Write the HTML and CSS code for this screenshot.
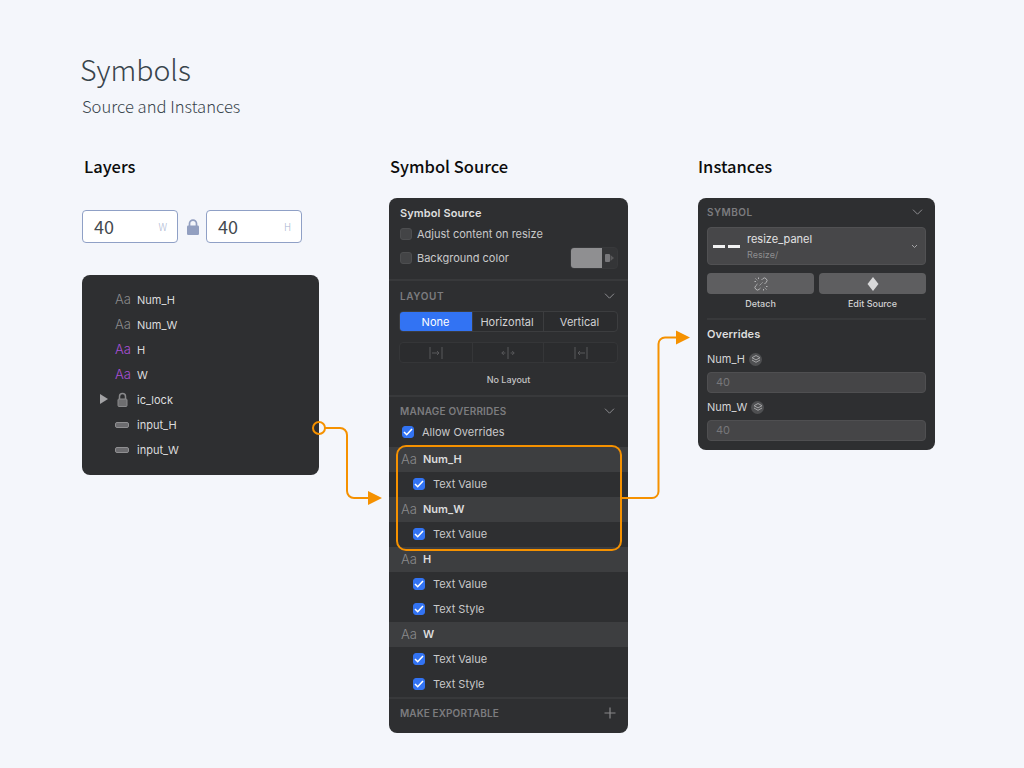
FILE: index.html
```html
<!DOCTYPE html>
<html lang="en">
<head>
<meta charset="utf-8">
<title>Symbols</title>
<link rel="stylesheet" href="styles.css">
</head>
<body>
<main class="page">
  <header class="head">
    <h1 class="title">Symbols</h1>
    <p class="subtitle">Source and Instances</p>
  </header>
  <div class="columns">
    <section class="col col-layers">
      <h2 class="col-title">Layers</h2>
      <div class="size-row">
        <div class="size-input"><span class="size-val">40</span><span class="size-unit">W</span></div>
        <svg class="size-lock" width="14" height="16" viewBox="0 0 14 16"><path d="M3.5 7V4.6a3.5 3.5 0 0 1 7 0V7" fill="none" stroke="#929fc0" stroke-width="1.7"/><rect x="1" y="6.5" width="12" height="9.5" rx="1.2" fill="#929fc0"/></svg>
        <div class="size-input"><span class="size-val">40</span><span class="size-unit">H</span></div>
      </div>
      <div class="panel layers">
        <div class="layer"><span class="aa">Aa</span><span>Num_H</span></div>
        <div class="layer"><span class="aa">Aa</span><span>Num_W</span></div>
        <div class="layer"><span class="aa purple">Aa</span><span>H</span></div>
        <div class="layer"><span class="aa purple">Aa</span><span>W</span></div>
        <div class="layer">
          <svg class="caret" width="8" height="10" viewBox="0 0 8 10"><path d="M0 0l8 5-8 5z" fill="#a3a3a5"/></svg>
          <svg class="layer-icon" width="14" height="15" viewBox="0 0 14 15"><path d="M4 7V4.500a3 3 0 0 1 6 0V7" fill="none" stroke="#8a8a8c" stroke-width="1.500"/><rect x="2.500" y="7" width="9" height="7.500" rx="1" fill="#6e6e70" stroke="#8a8a8c"/></svg>
          <span>ic_lock</span>
        </div>
        <div class="layer"><span class="bar-icon"></span><span>input_H</span></div>
        <div class="layer"><span class="bar-icon"></span><span>input_W</span></div>
      </div>
    </section>

    <section class="col col-source">
      <h2 class="col-title">Symbol Source</h2>
      <div class="panel source">
        <div class="block block-top">
          <div class="strong-title">Symbol Source</div>
          <label class="check-row"><span class="box"></span>Adjust content on resize</label>
          <label class="check-row bg-row"><span class="box"></span>Background color
            <span class="swatch"><span class="swatch-fill"></span><svg class="swatch-icon" width="9" height="10" viewBox="0 0 9 10"><rect x="0" y="1" width="5" height="8" rx="1" fill="#77777a"/><path d="M5.500 2l3.500 3-3.500 3z" fill="#5a5a5c"/></svg></span>
          </label>
        </div>
        <div class="block block-layout">
          <div class="sec-head"><span>LAYOUT</span><svg class="chev" width="11" height="6" viewBox="0 0 11 6"><path d="M1 .7l4.500 4.500L10 .7" fill="none" stroke="#8d8d90" stroke-width="1"/></svg></div>
          <div class="seg seg-text">
            <span class="seg-item on">None</span><span class="seg-item">Horizontal</span><span class="seg-item">Vertical</span>
          </div>
          <div class="seg align">
            <span class="seg-item"><svg width="14" height="14" viewBox="0 0 14 14"><path d="M1 1v12M13 1v12M3 7h7M8 5l2 2-2 2" fill="none" stroke="#58585b" stroke-width="1"/></svg></span>
            <span class="seg-item"><svg width="14" height="14" viewBox="0 0 14 14"><path d="M7 1v12M.8 7h3.600M13.200 7H9.600M2.800 5l-2 2 2 2M11.200 5l2 2-2 2" fill="none" stroke="#58585b" stroke-width="1"/></svg></span>
            <span class="seg-item"><svg width="14" height="14" viewBox="0 0 14 14"><path d="M1 1v12M13 1v12M11 7H4M6 5L4 7l2 2" fill="none" stroke="#58585b" stroke-width="1"/></svg></span>
          </div>
          <div class="no-layout">No Layout</div>
        </div>
        <div class="block block-over">
          <div class="sec-head"><span>MANAGE OVERRIDES</span><svg class="chev" width="11" height="6" viewBox="0 0 11 6"><path d="M1 .7l4.500 4.500L10 .7" fill="none" stroke="#8d8d90" stroke-width="1"/></svg></div>
          <label class="allow"><span class="box checked"><svg width="10" height="8" viewBox="0 0 10 8"><path d="M1 4l2.700 2.700L9 1" fill="none" stroke="#fff" stroke-width="1.600"/></svg></span>Allow Overrides</label>
          <div class="over-head"><span class="aa">Aa</span><b>Num_H</b></div>
          <label class="over-row"><span class="box checked"><svg width="10" height="8" viewBox="0 0 10 8"><path d="M1 4l2.700 2.700L9 1" fill="none" stroke="#fff" stroke-width="1.600"/></svg></span>Text Value</label>
          <div class="over-head"><span class="aa">Aa</span><b>Num_W</b></div>
          <label class="over-row"><span class="box checked"><svg width="10" height="8" viewBox="0 0 10 8"><path d="M1 4l2.700 2.700L9 1" fill="none" stroke="#fff" stroke-width="1.600"/></svg></span>Text Value</label>
          <div class="over-head"><span class="aa">Aa</span><b>H</b></div>
          <label class="over-row"><span class="box checked"><svg width="10" height="8" viewBox="0 0 10 8"><path d="M1 4l2.700 2.700L9 1" fill="none" stroke="#fff" stroke-width="1.600"/></svg></span>Text Value</label>
          <label class="over-row"><span class="box checked"><svg width="10" height="8" viewBox="0 0 10 8"><path d="M1 4l2.700 2.700L9 1" fill="none" stroke="#fff" stroke-width="1.600"/></svg></span>Text Style</label>
          <div class="over-head"><span class="aa">Aa</span><b>W</b></div>
          <label class="over-row"><span class="box checked"><svg width="10" height="8" viewBox="0 0 10 8"><path d="M1 4l2.700 2.700L9 1" fill="none" stroke="#fff" stroke-width="1.600"/></svg></span>Text Value</label>
          <label class="over-row"><span class="box checked"><svg width="10" height="8" viewBox="0 0 10 8"><path d="M1 4l2.700 2.700L9 1" fill="none" stroke="#fff" stroke-width="1.600"/></svg></span>Text Style</label>
        </div>
        <div class="sec-head export"><span>MAKE EXPORTABLE</span><svg width="12" height="12" viewBox="0 0 12 12"><path d="M6 .5v11M.5 6h11" fill="none" stroke="#88888a" stroke-width="1.200"/></svg></div>
      </div>
    </section>

    <section class="col col-inst">
      <h2 class="col-title">Instances</h2>
      <div class="panel inst">
        <div class="sec-head inst-head"><span>SYMBOL</span><svg class="chev" width="11" height="6" viewBox="0 0 11 6"><path d="M1 .7l4.500 4.500L10 .7" fill="none" stroke="#8d8d90" stroke-width="1"/></svg></div>
        <div class="picker">
          <span class="thumb"><i></i><i></i></span>
          <span class="picker-text"><span class="picker-name">resize_panel</span><span class="picker-path">Resize/</span></span>
          <svg width="7" height="5" viewBox="0 0 7 5"><path d="M1 1l2.500 2.500L6 1" fill="none" stroke="#a5a5a7" stroke-width="1"/></svg>
        </div>
        <div class="actions">
          <div class="action">
            <span class="action-btn"><svg width="14" height="14" viewBox="0 0 14 14"><g fill="none" stroke="#b4b4b6" stroke-width="1"><path d="M7.500 3l1.300-1.300a2.300 2.300 0 0 1 3.300 0l.2.200a2.300 2.300 0 0 1 0 3.300L10.500 7"/><path d="M6.500 11l-1.300 1.300a2.300 2.300 0 0 1-3.300 0l-.2-.2a2.300 2.300 0 0 1 0-3.300L3.500 7"/><path d="M1.500 1.500l2 2M4.500 .5v1.500M.5 4.500H2M12.500 12.500l-2-2M9.500 13.500V12M13.500 9.500H12M8.500 5.500l-3 3" stroke-dasharray="1.500 1"/></g></svg></span>
            <span class="action-label">Detach</span>
          </div>
          <div class="action">
            <span class="action-btn"><svg width="12" height="14" viewBox="0 0 12 14"><path d="M6 0l5.500 7L6 14 .5 7z" fill="#d8d8d9"/></svg></span>
            <span class="action-label">Edit Source</span>
          </div>
        </div>
        <div class="inst-over">
          <div class="strong-title">Overrides</div>
          <div class="field-label">Num_H<span class="stack-badge"><svg width="10" height="8" viewBox="0 0 10 8"><path d="M5 .5l4 2.200-4 2.200-4-2.200zM1 5l4 2.300L9 5" fill="none" stroke="#a5a5a7" stroke-width="1"/></svg></span></div>
          <div class="field">40</div>
          <div class="field-label">Num_W<span class="stack-badge"><svg width="10" height="8" viewBox="0 0 10 8"><path d="M5 .5l4 2.200-4 2.200-4-2.200zM1 5l4 2.300L9 5" fill="none" stroke="#a5a5a7" stroke-width="1"/></svg></span></div>
          <div class="field">40</div>
        </div>
      </div>
    </section>
  </div>
  <div class="highlight"></div>
  <svg class="connectors" width="1024" height="768" viewBox="0 0 1024 768">
    <g fill="none" stroke="#f59100" stroke-width="2">
      <circle cx="319" cy="428" r="6"/>
      <path d="M325 428h15a7 7 0 0 1 7 7v56a7 7 0 0 0 7 7h15"/>
      <path d="M622 498h30a6.500 6.500 0 0 0 6.500-6.500V344a6.500 6.500 0 0 1 6.500-6.500h16"/>
    </g>
    <path d="M368 491l14 7-14 7zM676 330.500l14 7-14 7z" fill="#f59100"/>
  </svg>
</main>
</body>
</html>
```
FILE: styles.css
```css
* { box-sizing: border-box; }
html, body { margin: 0; height: 768px; overflow: hidden; }
body { background: #f4f6fb; font-family: Inter, "Liberation Sans", sans-serif; color: #111; }
.page { position: relative; width: 1024px; height: 768px; padding: 49px 0 0 82px; }
.title { margin: 0 0 0 -2px; font: 300 28.500px/40px "Noto Sans CJK KR", "Noto Sans", sans-serif; color: #38444b; }
.subtitle { margin: 4px 0 0; font: 300 16.600px/26px "Noto Sans CJK KR", "Noto Sans", sans-serif; color: #38444b; }
.columns { display: flex; gap: 70px; margin-top: 35px; align-items: flex-start; }
.col { width: 237px; flex: none; }
.col-source { width: 239px; }
.col-title { margin: 0 0 20px; font: 500 16.500px/24px "Noto Sans CJK KR", "Noto Sans", sans-serif; color: #0c0c0c; height: 24px; }
.col-layers .col-title { padding-left: 2px; margin-bottom: 32px; }
.col-source .col-title { padding-left: 1px; }
.panel { background: #2e2f31; border-radius: 8px; font-size: 11px; color: #d6d6d7; }

.size-row { display: flex; align-items: center; gap: 7px; margin-bottom: 32px; }
.size-input { width: 96px; height: 33px; background: #fff; border: 1px solid #8fa0c6; border-radius: 4px; display: flex; align-items: center; justify-content: space-between; padding: 0 10px 0 11px; }
.size-val { font: 400 18px/1 "Noto Sans CJK KR", "Noto Sans", sans-serif; color: #444a50; margin-top: -2px; }
.size-unit { font: 300 10px/1 "Noto Sans CJK KR", "Noto Sans", sans-serif; color: #a7b3d0; }
.size-lock { flex: none; margin-left: 1px; margin-right: -1px; }

.layers { height: 200px; padding: 12px 0 0 33px; }
.layer { position: relative; height: 25px; display: flex; align-items: center; gap: 7px; color: #dcdcdd; }
.aa { width: 15px; font: 300 13px/1 Inter, "Liberation Sans", sans-serif; color: #8a8a8c; flex: none; }
.aa.purple { color: #a94fd6; }
.caret { position: absolute; left: -15px; top: 7px; }
.layer-icon { width: 15px; flex: none; }
.bar-icon { width: 14px; height: 6px; margin-right: 1px; background: #6c6c6f; border: 1px solid #8f8f91; border-radius: 2px; flex: none; }

.source { height: 535px; overflow: hidden; }
.block-top { height: 83px; padding: 7px 10px 0 11px; border-bottom: 2px solid #38393b; }
.strong-title { font-weight: 600; color: #dedede; line-height: 16px; letter-spacing: .1px; }
.check-row { display: flex; align-items: center; gap: 5px; height: 24px; font-size: 11px; color: #c9c9ca; }
.check-row:first-of-type { margin-top: 1px; }
.box { width: 12px; height: 12px; border-radius: 3px; background: #434446; border: 1px solid #4d4e50; flex: none; display: flex; align-items: center; justify-content: center; }
.box.checked { background: #3273f3; border-color: #3273f3; }
.bg-row { position: relative; }
.swatch { margin-left: auto; width: 48px; height: 22px; border-radius: 4px; display: flex; background: #343537; border: 1px solid #38393b; overflow: hidden; }
.swatch-fill { width: 32px; margin: -1px 0 -1px -1px; background: #8f8f91; }
.swatch-icon { margin: 5px 0 0 3px; }

.block-layout { height: 116px; padding: 0 10px; border-bottom: 2px solid #38393b; }
.sec-head { display: flex; align-items: center; justify-content: space-between; font-size: 10px; font-weight: 600; color: #7c7c7f; letter-spacing: .45px; }
.block-layout .sec-head { height: 30px; padding: 0 3px 0 1px; letter-spacing: .6px; }
.seg { display: flex; height: 21px; border: 1px solid #3c3d3f; border-radius: 4px; background: #2b2c2e; overflow: hidden; }
.seg-item { display: flex; align-items: center; justify-content: center; border-left: 1px solid #3c3d3f; color: #d2d2d3; }
.seg-item:nth-child(1) { flex: 0 0 72px; border-left: 0; }
.seg-item:nth-child(2) { flex: 0 0 71px; }
.seg-item:nth-child(3) { flex: 1; }
.seg-text .seg-item:nth-child(n+2) { padding-right: 2px; }
.seg-item.on { background: #3273f3; color: #fff; margin: -1px 0 -1px -1px; flex-basis: 73px; }
.align { margin-top: 10px; border-color: #353638; }
.align .seg-item { border-color: #353638; }
.no-layout { margin-top: 10px; text-align: center; font-size: 9px; line-height: 14px; font-weight: 500; color: #c4c4c5; }

.block-over { height: 302px; border-bottom: 2px solid #38393b; }
.block-over .sec-head { height: 26px; padding: 1px 13px 0 11px; letter-spacing: .2px; }
.allow { display: flex; align-items: center; gap: 8px; height: 18px; margin-bottom: 6px; padding-left: 13px; color: #c9c9ca; }
.over-head { display: flex; align-items: center; height: 25px; background: #3d3e40; padding: 0 0 1px 12px; gap: 7px; }
.over-head b { font-weight: 600; color: #dcdcdd; }
.over-row { display: flex; align-items: center; height: 25px; gap: 8px; padding: 0 0 1px 24px; color: #c9c9ca; }
.export { height: 28px; padding: 0 12px 0 11px; letter-spacing: .1px; }

.inst { height: 252px; padding: 0 9px; }
.inst-head { height: 29px; padding: 0 3px 2px 0; }
.picker { display: flex; align-items: center; height: 38px; background: #474749; border: 1px solid #515153; border-radius: 4px; padding: 0 7px 0 5px; }
.thumb { display: flex; gap: 3px; width: 34px; flex: none; }
.thumb i { width: 12px; height: 3px; background: #f2f2f2; }
.picker-text { flex: 1; display: flex; flex-direction: column; }
.picker-name { font-size: 11px; line-height: 15px; color: #e2e2e3; }
.picker-path { font-size: 9px; line-height: 13px; color: #8e8e90; margin-top: 1px; }
.actions { display: flex; gap: 5px; margin-top: 8px; padding-bottom: 8px; border-bottom: 2px solid #38393b; }
.action { flex: 1; display: flex; flex-direction: column; align-items: center; }
.action-btn { width: 100%; height: 21px; background: #5e5e60; border-radius: 4px; display: flex; align-items: center; justify-content: center; }
.action-label { font-size: 9px; line-height: 13px; margin-top: 3px; color: #d2d2d3; font-weight: 500; }
.inst-over { padding-top: 6px; }
.field-label { display: flex; align-items: center; gap: 4px; height: 16px; margin-top: 9px; color: #d4d4d5; }
.stack-badge { width: 13px; height: 13px; border-radius: 50%; background: #4f5052; display: flex; align-items: center; justify-content: center; }
.field { height: 21px; margin-top: 5px; background: #454547; border: 1px solid #4f4f51; border-radius: 4px; padding-left: 8px; font-size: 11px; line-height: 19px; color: #77777a; }
.field + .field-label { margin-top: 6px; }

.highlight { position: absolute; left: 396px; top: 445px; width: 226px; height: 106px; border: 2px solid #f59100; border-radius: 10px; }
.connectors { position: absolute; left: 0; top: 0; pointer-events: none; }
```
